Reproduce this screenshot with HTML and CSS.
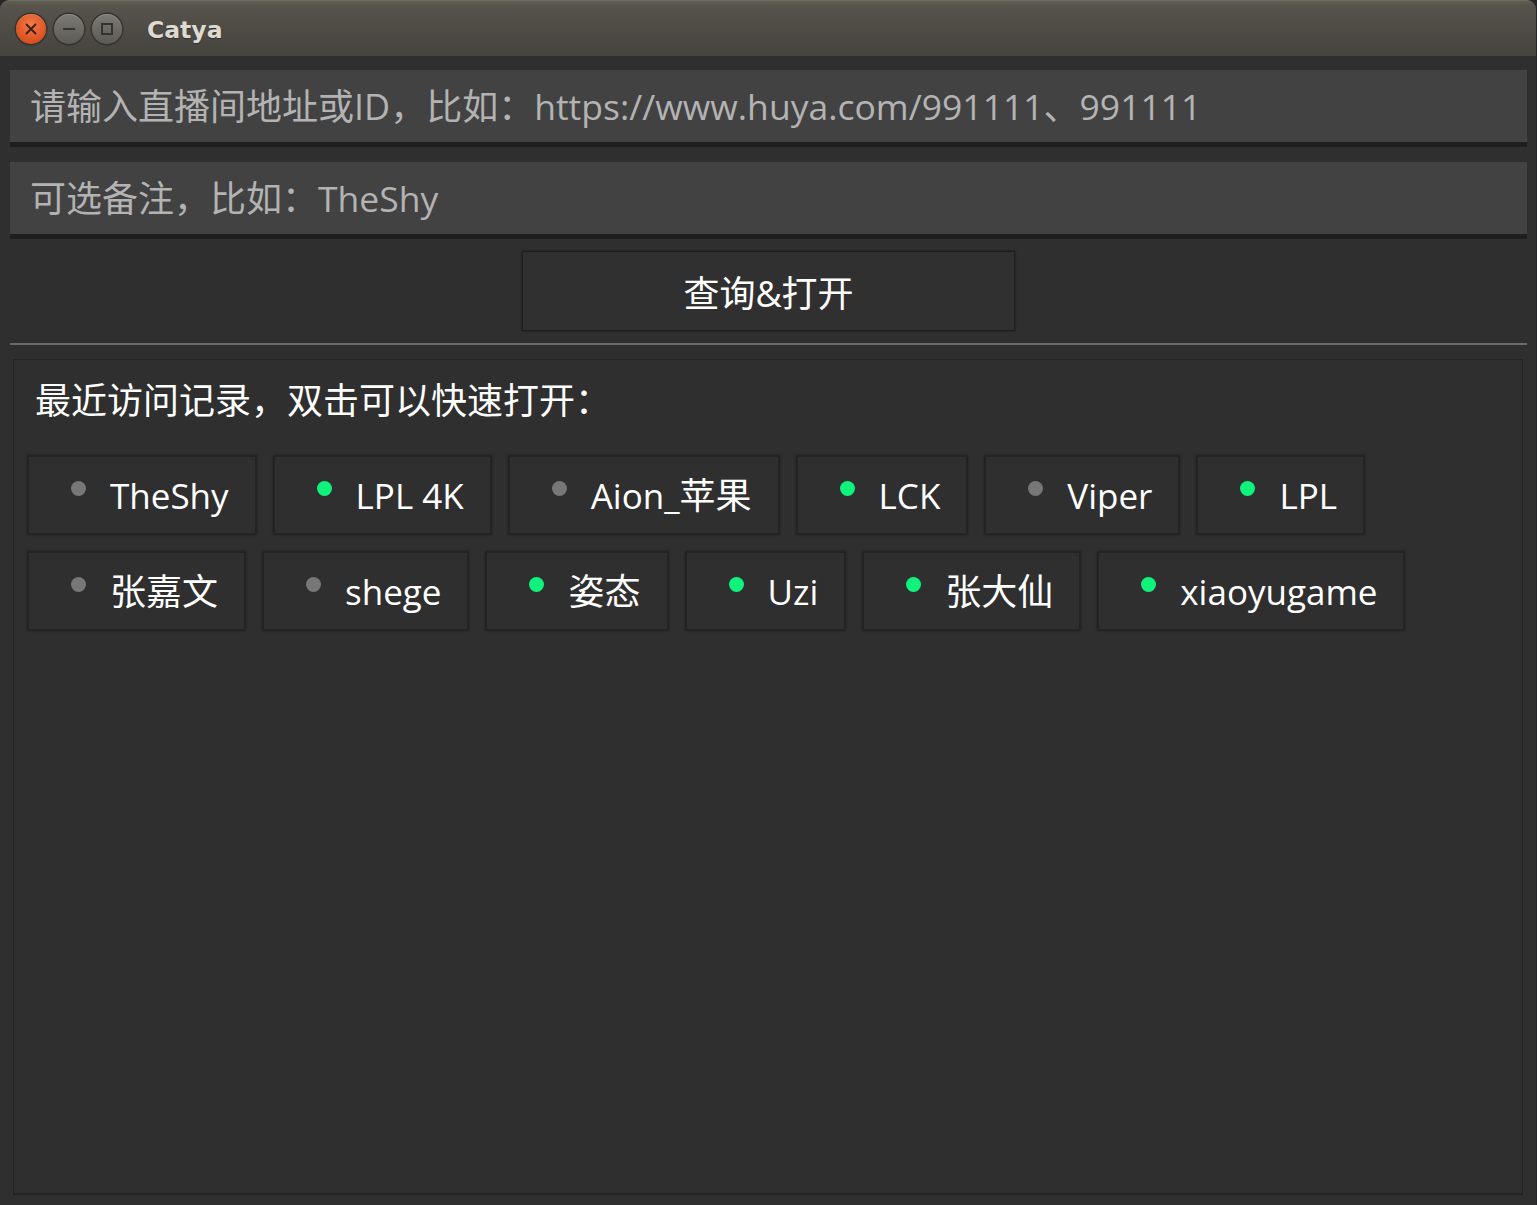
FILE: index.html
```html
<!DOCTYPE html>
<html lang="zh">
<head>
<meta charset="utf-8">
<title>Catya</title>
<link rel="stylesheet" href="styles.css">
</head>
<body>
<div class="window">
  <header class="titlebar">
    <div class="wbtns">
      <span class="wbtn close">
        <svg viewBox="0 0 30 30" width="30" height="30"><path d="M10.5 10.5 L19.5 19.5 M19.5 10.5 L10.5 19.5" stroke="#3a2219" stroke-width="2" stroke-linecap="round"/></svg>
      </span>
      <span class="wbtn">
        <svg viewBox="0 0 30 30" width="30" height="30"><path d="M9 15 H21" stroke="#34332f" stroke-width="2"/></svg>
      </span>
      <span class="wbtn">
        <svg viewBox="0 0 30 30" width="30" height="30"><rect x="10" y="10" width="10" height="10" fill="none" stroke="#34332f" stroke-width="2"/></svg>
      </span>
    </div>
    <span class="title">Catya</span>
  </header>
  <main class="content">
    <div class="field"><span class="placeholder">请输入直播间地址或ID，比如：<span class="latin">https://www.huya.com/991111</span>、<span class="latin">991111</span></span></div>
    <div class="field second"><span class="placeholder">可选备注，比如：<span class="latin">TheShy</span></span></div>
    <div class="btnrow"><button class="query">查询&amp;打开</button></div>
    <div class="sep"></div>
    <section class="group">
      <div class="label">最近访问记录，双击可以快速打开：</div>
      <div class="chips">
        <div class="chip"><span class="dot off"></span><span class="name">TheShy</span></div>
        <div class="chip"><span class="dot on"></span><span class="name">LPL 4K</span></div>
        <div class="chip"><span class="dot off"></span><span class="name">Aion_<span class="cjk">苹果</span></span></div>
        <div class="chip"><span class="dot on"></span><span class="name">LCK</span></div>
        <div class="chip"><span class="dot off"></span><span class="name">Viper</span></div>
        <div class="chip"><span class="dot on"></span><span class="name">LPL</span></div>
      </div>
      <div class="chips">
        <div class="chip"><span class="dot off"></span><span class="name cjk">张嘉文</span></div>
        <div class="chip"><span class="dot off"></span><span class="name">shege</span></div>
        <div class="chip"><span class="dot on"></span><span class="name cjk">姿态</span></div>
        <div class="chip"><span class="dot on"></span><span class="name">Uzi</span></div>
        <div class="chip"><span class="dot on"></span><span class="name cjk">张大仙</span></div>
        <div class="chip"><span class="dot on"></span><span class="name">xiaoyugame</span></div>
      </div>
    </section>
  </main>
</div>
</body>
</html>
```

FILE: styles.css
```css
* { box-sizing: border-box; }
html, body { margin: 0; padding: 0; }
body {
  background: #23262b;
  width: 1537px;
  height: 1205px;
  overflow: hidden;
  font-family: "Open Sans", "Noto Sans CJK SC", sans-serif;
}
.window {
  width: 1536px;
  height: 1205px;
  background: #2f2f2f;
  border-radius: 9px 9px 0 0;
  overflow: hidden;
  display: flex;
  flex-direction: column;
}
.titlebar {
  height: 56px;
  flex: none;
  background: linear-gradient(#615e55 0, #57544c 4px, #4e4b45 30px, #45433e 56px);
  border-top: 1px solid #6f6c62;
  display: flex;
  align-items: center;
  padding-left: 16px;
}
.wbtns { display: flex; gap: 8px; }
.wbtn {
  width: 30px;
  height: 30px;
  border-radius: 50%;
  background: linear-gradient(#7c7a74, #5c5a55);
  box-shadow: 0 0 0 1.5px #35332f, inset 0 1px 0 rgba(255,255,255,0.15);
  display: block;
}
.wbtn svg { display: block; }
.wbtn.close {
  background: radial-gradient(circle at 50% 35%, #f37a48, #e05a26 55%, #c9441a);
}
.title {
  margin-left: 25px;
  font-family: "DejaVu Sans", sans-serif;
  font-weight: bold;
  font-size: 23.5px;
  color: #dedad1;
  text-shadow: 0 1px 1px rgba(0,0,0,0.35);
  margin-top: 2px;
}
.content {
  flex: 1;
  display: flex;
  flex-direction: column;
  padding: 14px 9px 10px 10px;
}
.field {
  height: 77px;
  background: #424242;
  border-bottom: 5px solid #1e1e1e;
  display: flex;
  align-items: center;
  padding-left: 20px;
  padding-bottom: 4px;
}
.field.second { margin-top: 15px; }
.placeholder {
  font-size: 36px;
  color: #b3b3b3;
  white-space: nowrap;
}
.placeholder .latin { font-size: 35.5px; }
.btnrow {
  display: flex;
  justify-content: center;
  margin-top: 12px;
}
.query {
  width: 493px;
  height: 80px;
  background: #303030;
  border: 1px solid #1f1f1f;
  box-shadow: 0 0 2px rgba(0,0,0,0.55);
  color: #ffffff;
  font-family: "Open Sans", "Noto Sans CJK SC", sans-serif;
  font-size: 36px;
  padding: 0;
  margin-left: 0;
}
.sep {
  height: 2px;
  background: #6a6a6a;
  margin-top: 12px;
}
.group {
  flex: 1;
  margin: 14px 4px 0 3px;
  border: 1px solid #232323;
  border-bottom-width: 2px;
  padding: 16px 14px 0 14px;
}
.label {
  font-size: 36px;
  color: #ffffff;
  padding-left: 7px;
  line-height: 49px;
}
.chips {
  display: flex;
  gap: 18px;
  margin-top: 18px;
}
.label + .chips { margin-top: 31px; }
.chip {
  height: 78px;
  display: flex;
  align-items: center;
  padding: 0 26px 0 42px;
  background: #2f2f2f;
  border: 1px solid #232323;
  box-shadow: 0 0 2px 1px rgba(0,0,0,0.35);
}
.dot {
  width: 15px;
  height: 15px;
  border-radius: 50%;
  margin-bottom: 14px;
  margin-right: 24px;
  flex: none;
}
.dot.on { background: #0ff27c; }
.dot.off { background: #777777; }
.name {
  font-size: 35px;
  color: #ffffff;
  line-height: 49px;
  white-space: nowrap;
}
.cjk { font-size: 36px; }
```
